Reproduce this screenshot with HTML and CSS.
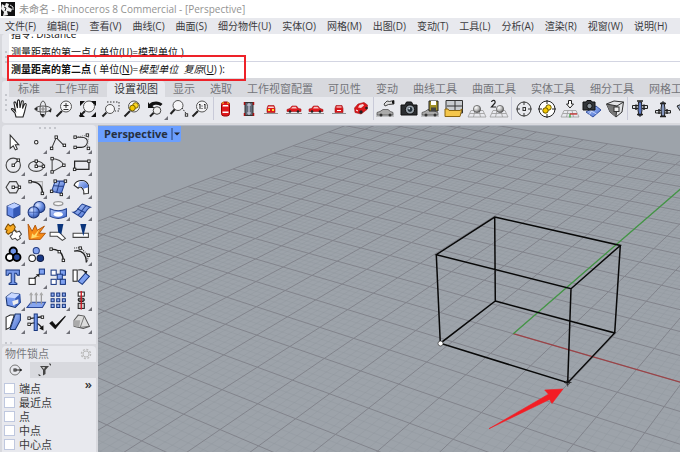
FILE: index.html
```html
<!DOCTYPE html>
<html lang="zh-CN">
<head>
<meta charset="utf-8">
<title>未命名 - Rhinoceros 8 Commercial - [Perspective]</title>
<link rel="stylesheet" href="styles.css">
</head>
<body>
<svg class="defs" aria-hidden="true">
  <defs>
    <linearGradient id="blue" x1="0" y1="0" x2="1" y2="1"><stop offset="0" stop-color="#b9cdfb"/><stop offset="1" stop-color="#3f68cf"/></linearGradient>
    <radialGradient id="ball" cx=".35" cy=".3" r=".8"><stop offset="0" stop-color="#fff"/><stop offset=".5" stop-color="#bbb"/><stop offset="1" stop-color="#444"/></radialGradient>
    <radialGradient id="blueball" cx=".35" cy=".3" r=".8"><stop offset="0" stop-color="#dfe8ff"/><stop offset=".5" stop-color="#6f93e6"/><stop offset="1" stop-color="#2b4a9a"/></radialGradient>
    <g id="car-side"><path d="M3 15.500H19" stroke="#777" stroke-width=".8"/><path d="M4 13.500V11.500L7 10.500L9 8H13.500L15.500 10.500L18 11V13.500Z" fill="#e0181c" stroke="#a31014" stroke-width=".6"/><path d="M9.500 8.800H12.800L14 10.500H8Z" fill="#f8c6c6"/><circle cx="7" cy="13.500" r="1.300" fill="#222"/><circle cx="15" cy="13.500" r="1.300" fill="#222"/></g>
    <g id="car-gray"><path d="M1 18H19" stroke="#888" stroke-width=".8"/><path d="M2 17V14.500L5 13.500L8 11.500H13L15.500 13.500L18 14.500V17Z" fill="#aaa" stroke="#555" stroke-width=".8"/><circle cx="6" cy="17" r="1.500" fill="#333"/><circle cx="15" cy="17" r="1.500" fill="#333"/></g>
    <g id="mesh"><path d="M5 12.500H17L20 19H2ZM9 12.500L7.500 19M13 12.500L14.500 19M4 15.500H18" fill="none" stroke="#999" stroke-width=".8"/></g>
    <g id="lens"><path d="M8 13L2.500 18.500" stroke="#222" stroke-width="2"/><circle cx="12" cy="8.500" r="5.500" fill="#f5f5f7" stroke="#555"/></g>
    <g id="node"><rect x="-1.200" y="-1.200" width="2.400" height="2.400" fill="#fff" stroke="#222" stroke-width=".9"/></g>
  </defs>
</svg>

<header class="titlebar">
  <svg class="logo" viewBox="0 0 14 14" aria-hidden="true"><path d="M0 0H14V14H0Z" fill="#111"/><path d="M1 2L4 4L5 1L8 2L7 5L11 7L10 10L6 9L7 13L2 14L3 10L0 7Z" fill="#eee"/><path d="M4 6L6 7M9 3L12 5L12 8" stroke="#ddd" fill="none"/><path d="M3 5L5 6L4 9" stroke="#222" fill="none"/></svg>
  <span>未命名 - Rhinoceros 8 Commercial - [Perspective]</span>
</header>

<nav class="menubar" aria-label="菜单">
  <button>文件(F)</button><button>编辑(E)</button><button>查看(V)</button><button>曲线(C)</button><button>曲面(S)</button><button>细分物件(U)</button><button>实体(O)</button><button>网格(M)</button><button>出图(D)</button><button>变动(T)</button><button>工具(L)</button><button>分析(A)</button><button>渲染(R)</button><button>视窗(W)</button><button>说明(H)</button>
</nav>

<section class="command">
  <div class="grip" aria-hidden="true"><i></i><i></i><i></i></div>
  <div class="command-body">
    <div class="history"><p>指令: Distance</p><p>测量距离的第一点 ( 单位(U)=模型单位 )</p></div>
    <div class="prompt">
      <label for="cmd"><b>测量距离的第二点</b> ( 单位(<u>N</u>)=<em>模型单位</em> &nbsp;<em>复原</em>(<u>U</u>) ):</label>
      <input id="cmd" type="text" autocomplete="off">
    </div>
  </div>
  <div class="callout" aria-hidden="true"></div>
</section>

<section class="toolbar">
  <div class="grip" aria-hidden="true"><i></i><i></i><i></i><i></i></div>
  <div class="toolbar-body">
    <div class="tabs"><button>标准</button><button>工作平面</button><button class="active">设置视图</button><button>显示</button><button>选取</button><button>工作视窗配置</button><button>可见性</button><button>变动</button><button>曲线工具</button><button>曲面工具</button><button>实体工具</button><button>细分工具</button><button>网格工具</button></div>
    <div class="tools">
      <div class="group nine">
        <button aria-label="平移"><svg viewBox="0 0 22 22"><path d="M7 19L6 15L2.500 11.500C2 10.500 3.500 10 4.500 11L6.500 13L5 5C5 3.500 6.500 3.500 7 5L8.500 10L8.500 3C8.800 1.500 10.300 1.500 10.500 3L11 10L12.500 3.500C13 2.300 14.500 2.700 14.300 4L13.500 10.500L15.500 6C16.300 5 17.500 5.700 17.200 7L15.500 14L14 19Z" fill="#fff" stroke="#222" stroke-width="1.100"/></svg></button>
        <button aria-label="旋转视图"><svg viewBox="0 0 22 22" fill="none"><ellipse cx="11" cy="11" rx="8" ry="3" stroke="#555"/><ellipse cx="11" cy="11" rx="3" ry="8" stroke="#555"/><path d="M11 8.500V13.500M8.500 11H13.500" stroke="#888" stroke-width="1.200"/><path d="M2 11L5.500 9V12.500ZM19.500 10.500L16 13L19 14.500ZM11 19.500L8 16H12.500Z" fill="#222"/></svg></button>
        <button aria-label="动态缩放"><svg viewBox="0 0 22 22"><use href="#lens"/><path d="M9.500 7.500H14.500M12 5V10M9.500 11.500H14.500" stroke="#333"/></svg></button>
        <button aria-label="缩放至范围"><svg viewBox="0 0 22 22"><use href="#lens"/><path d="M3 8V3H8ZM14 3H19V8ZM3 14V19H8ZM14 19H19V14Z" fill="#111"/></svg></button>
        <button aria-label="框选缩放"><svg viewBox="0 0 22 22"><path d="M7 4H19V13H15" fill="none" stroke="#333" stroke-dasharray="1.500 1.500"/><path d="M6.500 14.500L2.500 18.500" stroke="#222" stroke-width="2"/><circle cx="10" cy="11" r="4.500" fill="#f5f5f7" stroke="#555"/></svg></button>
        <button aria-label="缩放至选取物件"><svg viewBox="0 0 22 22"><use href="#lens"/><circle cx="13.500" cy="7.500" r="2.800" fill="#ffd928" stroke="#776300"/><circle cx="10.500" cy="10" r="2.800" fill="#f5c800" stroke="#776300"/></svg></button>
        <button aria-label="复原视图" class="more"><svg viewBox="0 0 22 22"><path d="M4.500 6C8 2.500 15 3 17.500 6L15.500 8C13 6.300 9.500 6.300 7.500 8L9.500 10H3V4Z" fill="#111"/><path d="M9 14.500L5 18.500" stroke="#222" stroke-width="2"/><circle cx="12" cy="12.500" r="3.800" fill="#eee" stroke="#444"/></svg></button>
        <button aria-label="目标缩放"><svg viewBox="0 0 22 22"><path d="M8 10L2.500 16" stroke="#222" stroke-width="2"/><circle cx="10" cy="7.500" r="5" fill="#f5f5f7" stroke="#555"/><path d="M14 10L18.500 16" stroke="#333" stroke-dasharray="1.500 1"/><use href="#node" x="18.500" y="17"/></svg></button>
        <button aria-label="1:1 缩放"><svg viewBox="0 0 22 22"><use href="#lens"/><path d="M9 7L10 6V11M14 7L15 6V11M12 7.500V8.500M12 10V11" stroke="#222" fill="none"/></svg></button>
      </div>
      <div class="group seven">
        <button aria-label="上视图"><svg viewBox="0 0 22 22"><rect x="6.500" y="4" width="8" height="14" rx="2.500" fill="#e0181c" stroke="#900"/><path d="M7.500 8.500H13.500L13 7H8Z" fill="#fff"/><path d="M7.500 13.500H13.500V15H7.500Z" fill="#fff"/><path d="M7 5H9M12 5H14" stroke="#ffd928"/></svg></button>
        <button aria-label="下视图"><svg viewBox="0 0 22 22"><rect x="7" y="4.500" width="8" height="13" fill="#626b78" stroke="#333"/><path d="M6.500 4V7M15.500 4V7M6.500 15V18M15.500 15V18" stroke="#a11" stroke-width="1.500"/><path d="M11 5V17M9 7H13M9 15H13" stroke="#ccd" stroke-width="1.200"/></svg></button>
        <button aria-label="前视图"><svg viewBox="0 0 22 22"><path d="M4 15.500H18" stroke="#777" stroke-width=".8"/><path d="M8 7.500H14L15 10.500V14.500H7V10.500Z" fill="#e0181c" stroke="#a31014" stroke-width=".6"/><path d="M8.500 8.500H13.500L14 10H8Z" fill="#f8d9d9"/><path d="M8 12H10M12 12H14" stroke="#ffe12b" stroke-width="1.800"/></svg></button>
        <button aria-label="右视图"><svg viewBox="0 0 22 22"><use href="#car-side"/></svg></button>
        <button aria-label="左视图"><svg viewBox="0 0 22 22"><use href="#car-side" transform="matrix(-1 0 0 1 22 0)"/></svg></button>
        <button aria-label="后视图"><svg viewBox="0 0 22 22"><path d="M4 15.500H18" stroke="#777" stroke-width=".8"/><path d="M8 7.500H14L15 10.500V14.500H7V10.500Z" fill="#d8171b" stroke="#a31014" stroke-width=".6"/><path d="M8.500 9H13.500M9 12.500H13" stroke="#fff"/></svg></button>
        <button aria-label="透视图"><svg viewBox="0 0 22 22"><path d="M4.500 10L8 6L14 4.500L17.500 7L17 11.500L11 16L5 14.500Z" fill="#d8171b" stroke="#a31014" stroke-width=".6"/><path d="M8 9.500L9.500 7L13 6L14 7.500L11 10Z" fill="#f7d5d5"/><circle cx="11" cy="14" r="1.700" fill="#222"/><circle cx="16.500" cy="10" r="1.300" fill="#222"/><path d="M6 12L8 13" stroke="#fff"/></svg></button>
      </div>
      <div class="group six">
        <button aria-label="放置相机"><svg viewBox="0 0 22 22"><use href="#car-gray"/><path d="M9 6L12 3L14.500 3.500L19 2.500V6L13.500 6.500L10 8Z" fill="#ddd" stroke="#333" stroke-width=".9"/><path d="M17 3L19 2.500V6L17 5.500Z" fill="#111"/></svg></button>
        <button aria-label="相机"><svg viewBox="0 0 22 22"><path d="M3 7H7L8.500 4H13.500L15 7H19V17H3Z" fill="#2b2d30" stroke="#111"/><circle cx="12" cy="11.500" r="4.600" fill="#9aa4ad" stroke="#111"/><circle cx="12" cy="11.500" r="2.400" fill="#26313a"/><circle cx="11.200" cy="10.500" r=".9" fill="#dfe9f2"/></svg></button>
        <button aria-label="保存视图"><svg viewBox="0 0 22 22"><use href="#car-gray"/><path d="M9 3H18V13H9Z" fill="#a08f28" stroke="#222"/><path d="M11 3H16V7H11Z" fill="#fff"/><path d="M11 9.500H16V13H11Z" fill="#444"/></svg></button>
        <button aria-label="打开视图"><svg viewBox="0 0 22 22"><path d="M3 2.500H19.500V15H3Z" fill="#c9ccd0" stroke="#333"/><path d="M12 3V14M4 8H19" stroke="#333"/><path d="M2 11H5L6 12.500H17L19 11L17 18.500H2Z" fill="#f4c64b" stroke="#8a6510"/></svg></button>
        <button aria-label="单点透视"><svg viewBox="0 0 22 22"><use href="#mesh"/><circle cx="11" cy="11" r="3.600" fill="url(#ball)" stroke="#555" stroke-width=".7"/></svg></button>
        <button aria-label="两点透视"><svg viewBox="0 0 22 22"><use href="#mesh"/><circle cx="12" cy="11" r="3.600" fill="url(#ball)" stroke="#555" stroke-width=".7"/><path d="M3.500 4C4 1.500 8 2 7 5L3.500 9H8" fill="none" stroke="#222" stroke-width="1.200"/></svg></button>
      </div>
      <div class="group five">
        <button aria-label="目标点"><svg viewBox="0 0 22 22" fill="none" stroke="#333"><circle cx="11" cy="11" r="7"/><path d="M11 3.500V7M11 15V18.500M3.500 11H7M15 11H18.500"/><rect x="10" y="9.500" width="2.500" height="3"/></svg></button>
        <button aria-label="目标至物件"><svg viewBox="0 0 22 22"><circle cx="11" cy="11" r="8" fill="#fff" stroke="#222"/><path d="M11 2V6M11 16V20M2 11H6M16 11H20" stroke="#222"/><circle cx="12.500" cy="9.500" r="2.700" fill="#ffdb22" stroke="#665500"/><circle cx="9.500" cy="12.500" r="2.700" fill="#f5c800" stroke="#665500"/></svg></button>
        <button aria-label="正对工作平面"><svg viewBox="0 0 22 22"><use href="#mesh"/><path d="M11 16V19.500" stroke="#25a02c" stroke-width="1.200"/><path d="M11 16H18" stroke="#c22" stroke-width="1.200"/><path d="M9.500 2.500H12.500V6H14.500L11 10L7.500 6H9.500Z" fill="#fff" stroke="#222"/></svg></button>
        <button aria-label="相机平面"><svg viewBox="0 0 22 22"><path d="M5 14L15 8L20 12L12 19Z" fill="url(#blue)" stroke="#3652a0"/><path d="M8.500 12L15.500 16M12 10L8.500 16.500" stroke="#dbe5ff" stroke-width=".8"/><path d="M2 4H5L6 2.500H10L11 4H14V12H2Z" fill="#33363a" stroke="#111"/><circle cx="8.500" cy="8" r="2.700" fill="#8b949c" stroke="#111"/></svg></button>
        <button aria-label="视锥"><svg viewBox="0 0 22 22"><path d="M2.500 6L10 3L19.500 4L18 14L12 19L6 14Z" fill="#e3e4e6" stroke="#333"/><path d="M2.500 6L13 8L12 19L6 14Z" fill="#777"/><path d="M2.500 6L13 8L19.500 4M13 8L12 19" fill="none" stroke="#333"/><rect x="10" y="9" width="5" height="4.500" fill="#eee" stroke="#333"/></svg></button>
      </div>
      <div class="group three">
        <button aria-label="飞机上视"><svg viewBox="0 0 22 22"><path d="M3.500 7.500H18.500V10.500H3.500Z" fill="#dfe2e6" stroke="#222"/><path d="M9.500 4H12.500L13 12L12 18H10L9 12Z" fill="#5c79c4" stroke="#222"/><path d="M8 3H14M8 16.500H14" stroke="#222" stroke-width="1.500"/><path d="M7 6.500V12M15 6.500V12" stroke="#222" stroke-width="1.500"/></svg></button>
        <button aria-label="飞机下视"><svg viewBox="0 0 22 22"><path d="M3.500 12.500H18.500V15H3.500Z" fill="#dfe2e6" stroke="#222"/><path d="M10 4H12L13 11L12.500 18H9.500L9 11Z" fill="#8496be" stroke="#222"/><path d="M8 5.500H14M8 18.500H14" stroke="#222" stroke-width="1.500"/><path d="M7 11V16M15 11V16" stroke="#222" stroke-width="1.500"/></svg></button>
        <button aria-label="飞机侧视"><svg viewBox="0 0 22 22"><path d="M3 8L8 6L14 10L20 11V14H7Z" fill="#9aa6bd" stroke="#222"/></svg></button>
      </div>
    </div>
  </div>
</section>

<main class="workspace">
  <aside class="sidebar">
    <section class="panel">
      <div class="grip flat" aria-hidden="true"><i></i><i></i><i></i><i></i></div>
      <div class="palette">
        <button aria-label="选取"><svg viewBox="0 0 22 22"><path d="M8 4V17L11 14.500L13 18.500L15 17.500L13 13.500H16.500Z" fill="#fff" stroke="#333"/></svg></button>
        <button aria-label="点" class="more"><svg viewBox="0 0 22 22"><circle cx="11" cy="11" r="1.700" fill="#fff" stroke="#222"/></svg></button>
        <button aria-label="多重直线" class="more"><svg viewBox="0 0 22 22"><path d="M4.500 17L9 6.500L17 14.500" fill="none" stroke="#333"/><use href="#node" x="4.500" y="17"/><use href="#node" x="9" y="6"/><use href="#node" x="17" y="14"/></svg></button>
        <button aria-label="控制点曲线" class="more"><svg viewBox="0 0 22 22"><path d="M6 6H11C20 6 18 16 11 16H6" fill="none" stroke="#222"/><path d="M6 6L17 4M17 17L18 5" fill="none" stroke="#777" stroke-dasharray="1 1"/><use href="#node" x="5" y="6"/><use href="#node" x="5" y="16"/><use href="#node" x="17" y="4"/><use href="#node" x="18" y="17"/></svg></button>

        <button aria-label="圆" class="more"><svg viewBox="0 0 22 22"><circle cx="11" cy="11" r="7" fill="none" stroke="#444" stroke-width="1.100"/><path d="M11 11L16 6" stroke="#333"/><use href="#node" x="11" y="11"/><use href="#node" x="16" y="6"/></svg></button>
        <button aria-label="椭圆" class="more"><svg viewBox="0 0 22 22"><ellipse cx="11" cy="12" rx="7.500" ry="5" fill="none" stroke="#444" stroke-width="1.100"/><path d="M11 7V12H18" fill="none" stroke="#333"/><use href="#node" x="11" y="7"/><use href="#node" x="11" y="12"/><use href="#node" x="18" y="12"/></svg></button>
        <button aria-label="圆弧" class="more"><svg viewBox="0 0 22 22"><path d="M5 4.500C11 5 15 8 16.500 11L5 17.500Z" fill="none" stroke="#444"/><use href="#node" x="5" y="4.500"/><use href="#node" x="5" y="17.500"/><use href="#node" x="16.500" y="11"/></svg></button>
        <button aria-label="矩形" class="more"><svg viewBox="0 0 22 22"><rect x="4.500" y="7" width="14" height="8" fill="none" stroke="#222" stroke-width="1.200"/><use href="#node" x="4.500" y="15"/><use href="#node" x="18.500" y="7"/></svg></button>

        <button aria-label="多边形" class="more"><svg viewBox="0 0 22 22"><path d="M4 11L7.500 5.500H14L17 11L14 16.500H7.500Z" fill="none" stroke="#444" stroke-width="1.100"/><path d="M11 11H17" stroke="#333"/><use href="#node" x="11" y="11"/><use href="#node" x="17" y="11"/></svg></button>
        <button aria-label="曲线圆角" class="more"><svg viewBox="0 0 22 22"><path d="M5 5.500H17V17" fill="none" stroke="#aaa"/><path d="M5 5.500C13 5.500 17 9 17 17" fill="none" stroke="#222" stroke-width="1.400"/><use href="#node" x="5" y="5.500"/><use href="#node" x="17" y="17"/></svg></button>
        <button aria-label="角点曲面" class="more"><svg viewBox="0 0 22 22"><path d="M8 5L18 5L14 17L4.500 15Z" fill="url(#blue)" stroke="#223f8f"/><path d="M6.500 9.500L16.500 10M12.500 5L9.500 16" stroke="#263f86"/><use href="#node" x="8" y="5"/><use href="#node" x="18" y="5"/><use href="#node" x="4.500" y="15"/><use href="#node" x="14" y="18"/></svg></button>
        <button aria-label="放样" class="more"><svg viewBox="0 0 22 22"><path d="M4 9C6 4 15 2 18 9V17L13.500 17.500C14 12 10 9 8 12Z" fill="#fff" stroke="#222"/><path d="M9 5.500C14 4 18 7 18 11L13 12.500C12 10 10 9.500 8 11Z" fill="url(#blue)"/></svg></button>

        <button aria-label="立方体" class="more"><svg viewBox="0 0 22 22"><path d="M5 7L12 4L17.500 6.500V15L11 18.500L5 15.500Z" fill="#6a8feb" stroke="#1c3578"/><path d="M5 7L12 4L17.500 6.500L11 9.500Z" fill="#bdd0ff"/><path d="M11 9.500L17.500 6.500V15L11 18.500Z" fill="#3458b5"/></svg></button>
        <button aria-label="布尔并集" class="more"><svg viewBox="0 0 22 22"><circle cx="14" cy="8" r="5.500" fill="url(#blueball)" stroke="#1c3578"/><circle cx="8.500" cy="13" r="5.500" fill="url(#blueball)" stroke="#1c3578"/><path d="M8.500 7.500V18M3 13H14" stroke="#2a4795" stroke-width=".6"/></svg></button>
        <button aria-label="抽离曲面" class="more"><svg viewBox="0 0 22 22"><ellipse cx="11" cy="4.500" rx="4.500" ry="2" fill="#f7f7f7" stroke="#999" stroke-width="1.300"/><path d="M3 9.500C8 12 14 12 19 9.500V17C14 19.500 8 19.500 3 17Z" fill="url(#blue)" stroke="#23428f"/><ellipse cx="11" cy="15" rx="4.500" ry="2.400" fill="#fff"/></svg></button>
        <button aria-label="曲面变形" class="more"><svg viewBox="0 0 22 22"><path d="M3 13C7 13 8 8 12 5L20 8C16 9 15 15 11 18Z" fill="url(#blue)" stroke="#23428f"/><path d="M7 9.500L15 13.500M8 15.500C11 14 13 8 16 6.500" stroke="#23428f" fill="none"/></svg></button>

        <button aria-label="组合" class="more"><svg viewBox="0 0 22 22"><path d="M4 6L6 3L8 5L11 3L13 6L12 8L14 10L11 12L9 11L6 13L4 11L5 9L3 8Z" fill="#f6a81f" stroke="#7a4b00"/><path d="M10 11L12 9L14 11L17 10L19 13L17 15L18 17L15 19L13 17L10 18L8 15L10 13Z" fill="#fff" stroke="#444"/></svg></button>
        <button aria-label="炸开"><svg viewBox="0 0 22 22"><path d="M4 18L3 3L7 10L10 4L12 9L19 5L14 12L20 12L15 18Z" fill="#f58a16" stroke="#a84a00" stroke-width=".8"/><path d="M6 17L7 12L9 14L14 8L11 15L15 15Z" fill="#ffdc6b"/></svg></button>
        <button aria-label="修剪"><svg viewBox="0 0 22 22"><path d="M3 11H12L18 17L15 19L10 15H3Z" fill="#fff" stroke="#444"/><path d="M10 3H16L14 13L11 11Z" fill="#0a347b"/></svg></button>
        <button aria-label="分割"><svg viewBox="0 0 22 22"><path d="M3 12H18V16H3Z" fill="#fff" stroke="#444"/><path d="M10 3H16L13 15Z" fill="#0a347b"/></svg></button>

        <button aria-label="群组" class="more"><svg viewBox="0 0 22 22" stroke="#000" stroke-width="1.800"><path d="M11 6L7 13H15Z"/><circle cx="11" cy="7" r="3.600" fill="#6f94e9"/><circle cx="7.500" cy="13" r="3.600" fill="#fff"/><circle cx="14.500" cy="13" r="3.600" fill="#2a4ba0"/></svg></button>
        <button aria-label="解散群组"><svg viewBox="0 0 22 22"><circle cx="11" cy="6.500" r="3" fill="#84a4f1" stroke="#223b80"/><circle cx="7" cy="14" r="3.200" fill="#fff" stroke="#222"/><circle cx="15" cy="14" r="3.200" fill="#173887" stroke="#101d45"/></svg></button>
        <button aria-label="编辑点"><svg viewBox="0 0 22 22"><path d="M4 5C12 5 16 9 16 17" fill="none" stroke="#222" stroke-width="1.400"/><use href="#node" x="4" y="5"/><use href="#node" x="12" y="7.500"/><use href="#node" x="16" y="16"/></svg></button>
        <button aria-label="控制点" class="more"><svg viewBox="0 0 22 22"><path d="M4 7C12 5 16 11 16 18" fill="none" stroke="#222" stroke-width="1.400"/><path d="M4 4L10 3.500L18 11L17 17" fill="none" stroke="#333" stroke-dasharray="1 1"/><use href="#node" x="10" y="4"/><use href="#node" x="18" y="11"/></svg></button>

        <button aria-label="文字"><svg viewBox="0 0 22 22"><path d="M4 4H17V9H15L14 7H12.500V16L14.500 17V18H7V17L9 16V7H7L6 9H4Z" fill="#7899e8" stroke="#18377f"/></svg></button>
        <button aria-label="移动" class="more"><svg viewBox="0 0 22 22"><rect x="4" y="12" width="6" height="6" fill="#fff" stroke="#222"/><rect x="14" y="3" width="5" height="5" fill="#7fa1f0" stroke="#18377f"/><path d="M9 12L14 8" stroke="#222"/><path d="M10.500 8H14V11Z" fill="#222"/></svg></button>
        <button aria-label="复制"><svg viewBox="0 0 22 22" stroke="#18377f"><rect x="4" y="4" width="5" height="5" fill="#fff"/><rect x="13" y="4" width="5" height="5" fill="#7fa1f0"/><rect x="10" y="8" width="5" height="5" fill="#7fa1f0"/><rect x="4" y="13" width="5" height="5" fill="#fff"/><rect x="13" y="13" width="5" height="5" fill="#7fa1f0"/></svg></button>
        <button aria-label="旋转"><svg viewBox="0 0 22 22"><path d="M3 4H7V15H3Z" fill="#fff" stroke="#222"/><path d="M15 7L19 10L12 18L8 15Z" fill="#7fa1f0" stroke="#18377f"/><path d="M8 4C12 3 14 4 15 6" fill="none" stroke="#222"/><path d="M13 5H17L16 8Z" fill="#222"/></svg></button>

        <button aria-label="实体编辑" class="more"><svg viewBox="0 0 22 22"><path d="M4 8L9 4L17 5L18 13L13 18L5 16Z" fill="#7799ed" stroke="#17336f"/><path d="M4 8L9 4L17 5L13 9Z" fill="#cad9ff"/><path d="M13 9L18 5V13L13 18Z" fill="#3c60ba"/><path d="M10 12L16 10V14L11 16Z" fill="#eee"/></svg></button>
        <button aria-label="投影"><svg viewBox="0 0 22 22"><path d="M2 18L6 13H20L17 18Z" fill="#86a5ef" stroke="#2a4795"/><path d="M6 15V4M11 15V4M16 15V4" stroke="#999" stroke-width="1.200"/><path d="M4 6L6 3L8 6ZM9 6L11 3L13 6ZM14 6L16 3L18 6Z" fill="#aaa"/></svg></button>
        <button aria-label="阵列" class="more"><svg viewBox="0 0 22 22"><path d="M4 4H7V7H4ZM9.500 4H12.500V7H9.500ZM15 4H18V7H15ZM4 9.500H7V12.500H4ZM9.500 9.500H12.500V12.500H9.500ZM15 9.500H18V12.500H15ZM4 15H7V18H4ZM9.500 15H12.500V18H9.500ZM15 15H18V18H15Z" fill="#91adf0" stroke="#18377f"/></svg></button>
        <button aria-label="对齐" class="more"><svg viewBox="0 0 22 22"><rect x="8" y="3" width="6" height="4" fill="#fff" stroke="#222"/><ellipse cx="11" cy="10.500" rx="3" ry="1.800" fill="#777" stroke="#222"/><rect x="8" y="14" width="6" height="5" fill="#ccc" stroke="#222"/><path d="M11 2V20" stroke="#d21820" stroke-width="1.300"/></svg></button>

        <button aria-label="变形" class="more"><svg viewBox="0 0 22 22"><path d="M4 6L8 4H12L8 16L4 18Z" fill="#fff" stroke="#222"/><path d="M13 3H18V9L13 18H8Z" fill="url(#blue)" stroke="#17336f"/></svg></button>
        <button aria-label="分析方向" class="more"><svg viewBox="0 0 22 22"><path d="M4 7C8 8 13 5 17 6M4 13C8 11 12 10 17 17" fill="none" stroke="#222" stroke-width="1.300"/><path d="M9 3H12V19H9Z" fill="#7497ea" stroke="#18377f"/><use href="#node" x="4" y="7"/><use href="#node" x="17" y="6"/><use href="#node" x="4" y="13"/><path d="M18 19L14 17L18 14Z" fill="#111"/></svg></button>
        <button aria-label="检查" class="more"><svg viewBox="0 0 22 22"><path d="M3 12L8 17L18 5L8.500 14.500L5 10.500Z" fill="#111" stroke="#111"/></svg></button>
        <button aria-label="图块" class="more"><svg viewBox="0 0 22 22"><path d="M4 9L8 4L14 5L19 15L13 17L4 15Z" fill="#ddd" stroke="#555"/><path d="M10 9L4 9V15L9 16Z" fill="#aaa"/><path d="M14 5L10 16L19 15" fill="none" stroke="#666" stroke-width=".8"/></svg></button>
      </div>
      <div class="grip flat low" aria-hidden="true"><i></i><i></i></div>
    </section>

    <section class="snaps">
      <h2><span>物件锁点</span>
        <button aria-label="设置"><svg viewBox="0 0 12 12" fill="none" stroke="#bbb"><circle cx="6" cy="6" r="4.500" stroke-width="1.500" stroke-dasharray="2 1.500"/><circle cx="6" cy="6" r="3"/></svg></button></h2>
      <div class="snap-tabs">
        <button class="active" aria-label="锁点"><svg viewBox="0 0 16 14"><circle cx="7" cy="7" r="5" fill="none" stroke="#777"/><path d="M7 7H14" stroke="#222"/><rect x="6" y="6" width="2" height="2" fill="#fff" stroke="#222"/><path d="M12 5.500L14 7L12 8.500" fill="#222"/></svg></button>
        <button aria-label="过滤"><svg viewBox="0 0 16 14"><path d="M4 3H13L9.500 7V11L7 12.500V7Z" fill="#444"/><path d="M6 4H9L8 6.500" fill="#ccc"/><path d="M13 1H14.500V2.500M3 11V12.500H4.500" fill="none" stroke="#444"/></svg></button>
      </div>
      <div class="snap-list">
        <label><input type="checkbox">端点</label>
        <label><input type="checkbox">最近点</label>
        <label><input type="checkbox">点</label>
        <label><input type="checkbox">中点</label>
        <label><input type="checkbox">中心点</label>
        <button class="expand" aria-label="更多">»</button>
      </div>
    </section>
  </aside>

  <section class="viewport">
    <svg class="scene" viewBox="98 126 582 326" preserveAspectRatio="xMidYMid slice" role="img" aria-label="透视图中的立方体线框">
      <path id="minor" fill="none" stroke="#8e959c" stroke-width=".5" opacity=".6"/>
      <path id="major" fill="none" stroke="#82848c" stroke-width="1"/>
      <path d="M513.300 333.700L700 388" stroke="#9c4347" stroke-width="1.300"/>
      <path d="M513.300 333.700L700 172" stroke="#439645" stroke-width="1.300"/>
      <path d="M494.700 217L620.300 245.500L571 288.700L436.300 254.700ZM495.300 301L614.700 333L567.700 382.700L440.300 343.300ZM494.700 217L495.300 301M620.300 245.500L614.700 333M571 288.700L567.700 382.700M436.300 254.700L440.300 343.300" fill="none" stroke="#080808" stroke-width="1.500"/>
      <circle cx="440.500" cy="343.500" r="2.500" fill="#fff" stroke="#333" stroke-width=".7"/>
      <path d="M567.700 379V386.500M564 382.500H571.500" stroke="#111" stroke-width=".7"/><circle cx="567.700" cy="382.500" r="2" fill="none" stroke="#222" stroke-width=".8"/>
      <path d="M489 428.700L548.500 394.200L544.700 390L563 389L552 403.500L549.500 399.500Z" fill="#f31d24" stroke="#f31d24" stroke-width=".6" stroke-linejoin="round"/>
    </svg>
    <button class="view-title"><span>Perspective</span><svg viewBox="0 0 10 14"><path d="M1 1V13" stroke="#28416e"/><path d="M3 5.500H9L6 8.500Z" fill="#22242a"/></svg></button>
  </section>
</main>
<script src="script.js"></script>
</body>
</html>
```
FILE: styles.css
```css
* { box-sizing: border-box; }
html, body { height: 100%; }
body {
  margin: 0;
  display: flex;
  flex-direction: column;
  overflow: hidden;
  background: #d8d9de;
  color: #333;
  font: 10px/16px "Open Sans", "Noto Sans CJK SC", sans-serif;
}
button {
  margin: 0;
  padding: 0;
  border: 0;
  background: none;
  color: inherit;
  font: inherit;
  white-space: nowrap;
}
svg { display: block; }
p, h2 { margin: 0; }
.defs { position: absolute; width: 0; height: 0; }

.titlebar {
  flex: none;
  display: flex;
  align-items: center;
  gap: 4px;
  height: 18px;
  background: #fff;
  color: #929292;
}
.logo { width: 14px; height: 14px; margin-left: 1px; }

.menubar {
  flex: none;
  display: flex;
  gap: 11px;
  height: 16px;
  padding-left: 5px;
  background: #e8e9ee;
  color: #3b3b3e;
  overflow: hidden;
}

.grip {
  flex: none;
  display: flex;
  flex-direction: column;
  align-items: center;
  justify-content: center;
  gap: 3px;
  width: 7px;
  margin-left: 2px;
  background: #e8e9ee;
}
.grip i { width: 2px; height: 2px; border-radius: 1px; background: #b9bac0; }

.command {
  flex: none;
  position: relative;
  display: flex;
  height: 44px;
}
.command .grip { padding-top: 2px; border-radius: 3px 0 0 3px; }
.command-body { flex: 1; background: #fff; color: #111; }
.history {
  display: flex;
  flex-direction: column;
  justify-content: flex-end;
  height: 28px;
  padding-left: 2px;
  overflow: hidden;
  border-bottom: 1px solid #d3d5e2;
}
.history p { flex: none; line-height: 18px; }
.prompt { display: flex; height: 16px; padding-left: 2px; line-height: 14px; }
.prompt label { white-space: nowrap; }
.prompt input {
  flex: 1;
  min-width: 0;
  border: 0;
  padding: 0;
  background: none;
  font: inherit;
  outline: 0;
}
.callout {
  position: absolute;
  left: 7px;
  top: 21px;
  width: 239px;
  height: 26px;
  border: 2px solid #ee2229;
}

.toolbar { flex: none; display: flex; height: 45px; }
.toolbar .grip { border-radius: 3px 0 0 3px; margin-top: 3px; }
.toolbar-body { flex: 1; min-width: 0; overflow: hidden; }
.tabs {
  display: flex;
  gap: 1px;
  height: 19px;
  padding: 3px 0 0 2px;
  color: #74757a;
  font-size: 11px;
}
.tabs button { flex: none; height: 16px; padding: 0 7px; }
.tabs .active { background: #e8e9ee; color: #36373a; border-radius: 4px 4px 0 0; }
.tools {
  display: flex;
  height: 26px;
  padding-bottom: 3px;
  background: #e8e9ee;
}
.group {
  flex: none;
  display: grid;
  grid-auto-flow: column;
  grid-auto-columns: 1fr;
  align-items: center;
  margin-right: 1px;
  border-right: 1px solid #c9cad8;
}
.nine { width: 205px; }
.seven { width: 159px; }
.six { width: 137px; }
.five { width: 115px; }
.three { width: 68px; border: 0; }
.group button, .palette button { position: relative; }
.group svg { width: 22px; height: 22px; }
.more::after {
  content: "";
  position: absolute;
  right: 0;
  bottom: 0;
  border: 2px solid transparent;
  border-right-color: #707178;
  border-bottom-color: #707178;
}

.workspace { flex: 1; min-height: 0; display: flex; gap: 2px; padding-top: 2px; }
.sidebar {
  flex: none;
  display: flex;
  flex-direction: column;
  gap: 2px;
  width: 96px;
  padding-left: 2px;
}
.panel { padding-right: 4px; background: #e8e9ee; border-radius: 4px 4px 0 0; }
.grip.flat {
  flex-direction: row;
  width: auto;
  height: 6px;
  margin: 0;
  background: none;
}
.grip.flat.low { align-items: flex-end; justify-content: flex-start; height: 10px; padding-left: 3px; }
.palette { display: grid; grid-template-columns: repeat(4, 1fr); }
.palette button { aspect-ratio: 1; }
.palette svg { width: 100%; height: 100%; }

.snaps { flex: 1; display: flex; flex-direction: column; min-height: 0; }
.snaps h2 {
  flex: none;
  display: flex;
  align-items: center;
  justify-content: space-between;
  height: 16px;
  padding: 0 4px 0 3px;
  background: #e8e9ee;
  border-radius: 4px 4px 0 0;
  color: #77787c;
  font-weight: 400;
  font-size: 11px;
}
.snaps h2 svg { width: 12px; height: 12px; }
.snap-tabs { flex: none; display: flex; height: 16px; }
.snap-tabs button { width: 28px; padding: 0 6px; }
.snap-tabs .active { background: #e8e9ee; }
.snap-tabs svg { width: 16px; height: 14px; }
.snap-list {
  flex: 1;
  position: relative;
  padding: 4px 0 0 2px;
  background: #e8e9ee;
  font-size: 11px;
}
.snap-list label { display: flex; align-items: center; gap: 4px; height: 14px; color: #3a3a3c; }
.snap-list input {
  appearance: none;
  width: 11px;
  height: 11px;
  margin: 0;
  border: 1px solid #bfc8df;
  background: #fff;
}
.expand {
  position: absolute;
  top: 0;
  right: 4px;
  height: 12px;
  line-height: 12px;
  font-size: 13px;
  font-weight: 600;
}

.viewport { flex: 1; position: relative; min-width: 0; background: #9da3aa; border-top: 1px solid #b3b8c2; }
.scene { width: 100%; height: 100%; }
.view-title {
  position: absolute;
  left: 0;
  top: 0;
  display: flex;
  align-items: center;
  gap: 3px;
  height: 16px;
  padding: 0 0 0 6px;
  border-radius: 0 0 2px 0;
  background: #6b9fff;
  color: #263041;
  font-size: 11px;
  font-weight: 700;
}
.view-title svg { width: 10px; height: 14px; }
```
FILE: script.js
```javascript
// Projects the construction-plane grid onto the perspective view.
const origin = [513.3, 333.7];
const vanishU = [-1127, -142];
const vanishV = [1084, -160];
const scaleU = 0.0233;
const scaleV = 0.0384;
const extent = 14;

function project(u, v) {
  const a = u * scaleU;
  const b = v * scaleV;
  const w = 1 + a + b;
  return [0, 1]
    .map((k) => ((origin[k] + a * vanishU[k] + b * vanishV[k]) / w).toFixed(1))
    .join(" ");
}

let major = "";
let minor = "";
for (let n = -extent * 5; n <= extent * 5; n++) {
  const t = n / 5;
  const d =
    `M${project(t, -extent)}L${project(t, extent)}` +
    `M${project(-extent, t)}L${project(extent, t)}`;
  if (n % 5 === 0) major += d;
  else minor += d;
}
document.getElementById("major").setAttribute("d", major);
document.getElementById("minor").setAttribute("d", minor);
```
